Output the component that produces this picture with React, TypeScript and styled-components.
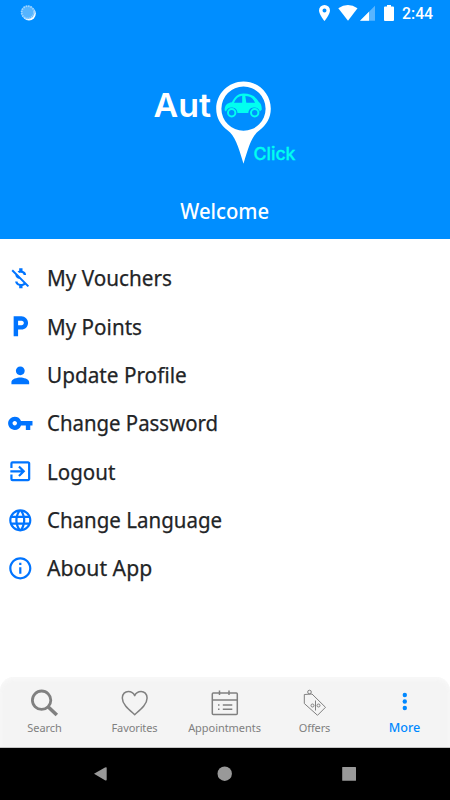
import React from 'react';
import styled, { createGlobalStyle } from 'styled-components';
import {
  MdMoneyOff, MdLocalParking, MdPerson, MdVpnKey, MdExitToApp, MdLanguage, MdInfoOutline,
} from 'react-icons/md';

const GlobalStyle = createGlobalStyle`
  * { box-sizing: border-box; }
  body { margin: 0; background: #fff; font-family: "Noto Sans", "Open Sans", sans-serif; }
`;

const Screen = styled.div`
  width: 450px;
  height: 800px;
  display: flex;
  flex-direction: column;
  overflow: hidden;
  background: #fff;
`;

const Header = styled.header`
  height: 239px;
  flex: none;
  background: #008eff;
  color: #fff;
  display: flex;
  flex-direction: column;
  align-items: center;
`;

const StatusBar = styled.div`
  width: 100%;
  height: 27px;
  display: flex;
  justify-content: space-between;
`;

const Logo = styled.svg`
  width: 160px;
  height: 100px;
  margin-top: 43px;
  display: block;
`;

const Welcome = styled.h1`
  margin: 27px 0 0;
  font-size: 21.3px;
  line-height: 28px;
  font-weight: 500;
  transform: scaleX(0.95);
`;

const Menu = styled.ul`
  flex: 1;
  margin: 0;
  padding: 15px 0 0;
  list-style: none;
`;

const MenuRow = styled.li`
  height: 48.35px;
  display: flex;
  align-items: center;
  padding-left: 6.7px;
  gap: 14.2px;
  color: #0074ff;
  svg { width: 26.6px; height: 26.6px; flex: none; }
`;

const MenuLabel = styled.span<{ $stretch: number }>`
  color: #222426;
  font-size: 21.5px;
  line-height: 30px;
  white-space: nowrap;
  -webkit-text-stroke: 0.25px #222426;
  transform: scaleX(${(p) => p.$stretch});
  transform-origin: left center;
`;

const TabBar = styled.nav`
  height: 71px;
  flex: none;
  display: grid;
  grid-template-columns: repeat(5, 90px);
  background: #f4f4f4;
  border-radius: 14px 14px 0 0;
  box-shadow: inset 0 2px 4px #f9f9f9;
  border-bottom: 1px solid #c4c4c4;
`;

const Tab = styled.div<{ $active?: boolean }>`
  display: flex;
  flex-direction: column;
  align-items: center;
  padding-top: 10px;
  padding-right: 2px;
  color: ${(p) => (p.$active ? '#0088ff' : '#808080')};
  svg { width: 32px; height: 32px; display: block; }
`;

const TabLabel = styled.span<{ $active?: boolean; $spacing: number }>`
  padding-left: 1px;
  font-size: ${(p) => (p.$active ? 12.6 : 11)}px;
  font-weight: ${(p) => (p.$active ? 500 : 400)};
  line-height: 18px;
  white-space: nowrap;
  letter-spacing: ${(p) => p.$spacing}px;
`;

const SystemBar = styled.footer`
  height: 52px;
  flex: none;
  background: #000;
  svg { display: block; }
`;

const menu = [
  { icon: MdMoneyOff, label: 'My Vouchers', stretch: 0.963 },
  { icon: MdLocalParking, label: 'My Points', stretch: 0.96 },
  { icon: MdPerson, label: 'Update Profile', stretch: 0.965 },
  { icon: MdVpnKey, label: 'Change Password', stretch: 0.948 },
  { icon: MdExitToApp, label: 'Logout', stretch: 0.955 },
  { icon: MdLanguage, label: 'Change Language', stretch: 0.953 },
  { icon: MdInfoOutline, label: 'About App', stretch: 0.985 },
];

const SearchIcon = () => (
  <svg viewBox="0 0 32 32" fill="none" stroke="currentColor">
    <circle cx="13.600" cy="13.200" r="9.200" strokeWidth="2.800" />
    <path d="M20.300 20 28.800 28" strokeWidth="3.600" />
  </svg>
);

const HeartIcon = () => (
  <svg viewBox="0 0 32 32" fill="none" stroke="currentColor" strokeWidth="1.5" strokeLinejoin="round">
    <path d="M16.700 27.600C11 22.600 4.300 17.600 4.300 11 4.300 6.800 7.200 4.400 10.300 4.400c3.200 0 5.300 1.700 6.400 4.200 1.100-2.500 3.200-4.200 6.400-4.200 3.100 0 6 2.400 6 6.600C29.100 17.600 22.400 22.600 16.700 27.600Z" />
  </svg>
);

const CalendarIcon = () => (
  <svg viewBox="0 0 32 32" fill="none" stroke="currentColor" strokeWidth="1.5">
    <rect x="4.300" y="6" width="25" height="21.600" rx="1" />
    <path d="M4.300 13H29.300M11.500 3.500V8M21 3.500V8M14.800 18H24.300M14.800 22.300H24.300M10 18h1.500M10 22.300h1.500" />
  </svg>
);

const OfferIcon = () => (
  <svg viewBox="0 0 32 32" fill="none" stroke="currentColor" strokeWidth="1">
    <path d="M6.300 7.500 14 7 27.500 20.300 19.500 28.300 6.300 16.500ZM17.500 13.500V23.500" />
    <circle cx="11.500" cy="5" r="1.800" />
    <circle cx="14.500" cy="18.500" r="1.500" />
    <circle cx="20.500" cy="18.500" r="1.500" />
  </svg>
);

const MoreIcon = () => (
  <svg viewBox="0 0 32 32" fill="currentColor">
    <circle cx="16.800" cy="8" r="2.200" />
    <circle cx="16.800" cy="14.500" r="2.200" />
    <circle cx="16.800" cy="21" r="2.200" />
  </svg>
);

const tabs = [
  { icon: SearchIcon, label: 'Search', spacing: -0.05 },
  { icon: HeartIcon, label: 'Favorites', spacing: -0.1 },
  { icon: CalendarIcon, label: 'Appointments', spacing: -0.05 },
  { icon: OfferIcon, label: 'Offers', spacing: -0.1 },
  { icon: MoreIcon, label: 'More', spacing: 0, active: true },
];

const Clock = styled.span`
  width: 48px;
  font: 500 15.8px/27px Roboto, sans-serif;
`;

const StatusRight = styled.div`
  display: flex;
`;

const BrandLogo = () => (
  <Logo viewBox="145 70 160 100" role="img" aria-label="Auto Click">
    <path
      fill="#fff"
      fillRule="evenodd"
      d="M243.500 81.500c15 0 27.300 12.200 27.300 27.300 0 9-4.500 16.500-11.300 21.500-7.500 5.500-10.500 15-16 33.500-5.500-18.500-8.500-28-16-33.500-6.800-5-11.300-12.500-11.300-21.500 0-15.100 12.200-27.300 27.300-27.300Zm0 5.100a22.100 22.100 0 1 0 0 44.200 22.100 22.100 0 0 0 0-44.200Z"
    />
    <path
      fill="#00fff0"
      d="M224.700 110.500c-.3-4.500 1.600-7.500 7.200-8.300 2.800-5.500 6.300-8.600 11.600-8.600 7.500 0 12.500 3 15.300 8.400 2 1.300 3.200 4 2.900 7.800l-1.900 1.700a5.900 5.900 0 0 0-11.500 1.600H237.500a5.900 5.900 0 0 0-11.500-1.600Z"
    />
    <path fill="#008eff" d="M234 102.700c1.700-3.900 4.400-6.600 8.200-6.900v6.900ZM245.300 95.900c5 .3 8.200 2.300 9.700 6.800h-8.700Z" />
    <g fill="none" stroke="#00fff0" strokeWidth="2">
      <circle cx="231.700" cy="112.800" r="3.700" />
      <circle cx="254.700" cy="112.800" r="3.700" />
    </g>
    <text x="153.500" y="117" fill="#fff" fontFamily="Inter, sans-serif" fontWeight="600" fontSize="32.500" textLength="57.500" lengthAdjust="spacingAndGlyphs">Aut</text>
    <text x="253.500" y="159.500" fill="#00fff0" stroke="#00fff0" strokeWidth="0.300" fontFamily="Inter, sans-serif" fontWeight="500" fontSize="17" textLength="42" lengthAdjust="spacingAndGlyphs">Click</text>
  </Logo>
);

export default function App() {
  return (
    <>
      <GlobalStyle />
      <Screen>
        <Header>
          <StatusBar>
            <svg width="60" height="27">
              <circle cx="29" cy="13.600" r="6.800" fill="#fff" />
              <circle cx="27.800" cy="12.300" r="6.800" fill="#55b4ff" />
              <circle cx="27.800" cy="12.300" r="6.200" fill="none" stroke="#a0d5ff" strokeWidth="1.800" strokeDasharray="1.400 1" />
            </svg>
            <StatusRight>
              <svg width="102" height="27" viewBox="300 0 102 27" fill="#fff">
                <path fillRule="evenodd" d="M324.500 5a5.500 5.500 0 0 1 5.500 5.500c0 4-5.500 10.500-5.500 10.500S319 14.500 319 10.500A5.500 5.500 0 0 1 324.500 5Zm0 3.500a2 2 0 1 0 0 4 2 2 0 0 0 0-4Z" />
                <path d="M338.300 8.300Q348 1.500 357.500 8.300L348 20.700Z" />
                <path d="M375 5.700V20.700H360Z" opacity=".35" />
                <path d="M369 11.700v9h-9Z" />
                <path d="M387 5h4v1.500h2q1 0 1 1V20q0 1-1 1h-8q-1 0-1-1V7.500q0-1 1-1h2Z" />
              </svg>
              <Clock>2:44</Clock>
            </StatusRight>
          </StatusBar>
          <BrandLogo />
          <Welcome>Welcome</Welcome>
        </Header>
        <Menu>
          {menu.map(({ icon: Icon, label, stretch }) => (
            <MenuRow key={label}>
              <Icon />
              <MenuLabel $stretch={stretch}>{label}</MenuLabel>
            </MenuRow>
          ))}
        </Menu>
        <TabBar>
          {tabs.map(({ icon: Icon, label, spacing, active }) => (
            <Tab key={label} $active={active}>
              <Icon />
              <TabLabel $active={active} $spacing={spacing}>{label}</TabLabel>
            </Tab>
          ))}
        </TabBar>
        <SystemBar>
          <svg width="450" height="52" fill="#999">
            <path d="M94 25.700 105 19.500q1.700-.8 1.700.5V31.500q0 1.500-1.700.7Z" />
            <circle cx="224.700" cy="25.700" r="7.200" />
            <rect x="342.200" y="19" width="13.800" height="13.800" rx=".5" />
          </svg>
        </SystemBar>
      </Screen>
    </>
  );
}
